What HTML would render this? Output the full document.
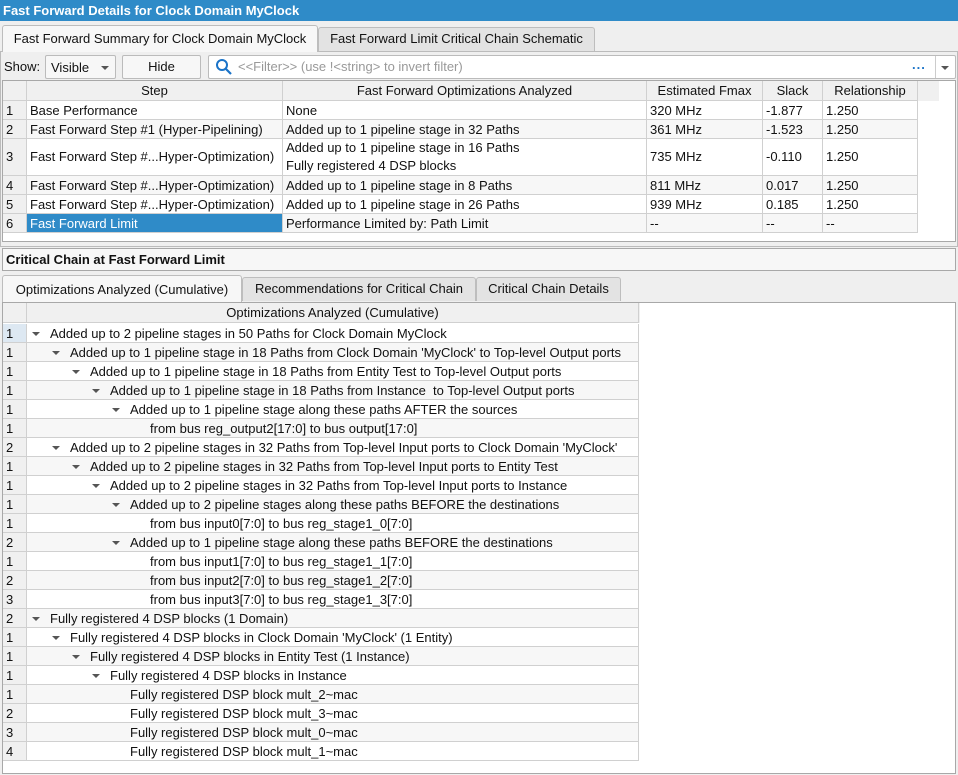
<!DOCTYPE html>
<html><head><meta charset="utf-8"><style>
*{box-sizing:border-box;margin:0;padding:0}
body{width:958px;height:775px;background:#efefef;font-family:"Liberation Sans","DejaVu Sans",sans-serif;font-size:13px;color:#111;position:relative;overflow:hidden}
.a{position:absolute}
.title{left:0;top:0;width:958px;height:21px;background:#2f8bc8;color:#fff;font-weight:bold;padding:3px 0 0 3px}
.tab{position:absolute;border:1px solid #bdbdbd;border-bottom:none;border-radius:3px 3px 0 0;background:#e3e3e3;text-align:center;line-height:22px}
.tab.act{background:#f7f7f7;}
.box{position:absolute;border:1px solid #a8a8a8;background:#fff}
.c{position:absolute;height:19px;line-height:19px;white-space:nowrap;overflow:hidden;border-right:1px solid #d0d0d0;border-bottom:1px solid #d0d0d0;padding-left:3px}
.h{background:#f0f0f0;text-align:center;padding-left:0}
.arr{display:inline-block;width:0;height:0;border-left:4px solid transparent;border-right:4px solid transparent;border-top:4px solid #555;position:absolute;top:8px}
</style></head><body>
<div class="a title">Fast Forward Details for Clock Domain MyClock</div>
<div class="a" style="left:0;top:51px;width:958px;height:196px;background:#efefef;border:1px solid #bbb"></div>
<div class="tab act" style="left:2px;top:25px;width:316px;height:27px;line-height:26px">Fast Forward Summary for Clock Domain MyClock</div>
<div class="tab" style="left:318px;top:27px;width:277px;height:24px">Fast Forward Limit Critical Chain Schematic</div>
<div class="a" style="left:4px;top:59px">Show:</div>
<div class="a" style="left:45px;top:55px;width:71px;height:24px;border:1px solid #bbb;border-radius:2px;background:#f7f7f7;padding:4px 0 0 5px">Visible<span class="arr" style="left:55px;top:10px"></span></div>
<div class="a" style="left:122px;top:55px;width:79px;height:24px;border:1px solid #bbb;border-radius:2px;background:#f7f7f7;text-align:center;line-height:22px">Hide</div>
<div class="a" style="left:208px;top:55px;width:748px;height:24px;border:1px solid #bbb;border-radius:2px;background:#fff"></div>
<svg class="a" style="left:215px;top:58px" width="18" height="18"><circle cx="7" cy="7" r="5" fill="none" stroke="#1a73c8" stroke-width="2"/><line x1="11" y1="11" x2="16" y2="16" stroke="#1a73c8" stroke-width="2.2"/></svg>
<div class="a" style="left:238px;top:59px;color:#999">&lt;&lt;Filter&gt;&gt; (use !&lt;string&gt; to invert filter)</div>
<div class="a" style="left:912px;top:57px;color:#1a73c8;font-weight:bold;letter-spacing:1px">...</div>
<div class="a" style="left:935px;top:56px;width:1px;height:22px;background:#ccc"></div>
<span class="arr" style="left:941px;top:66px"></span>
<div class="box" style="left:2px;top:80px;width:954px;height:162px"></div>
<div class="a" style="left:3px;top:81px;width:936px;height:20px;background:#f0f0f0"></div>
<div id="t1"></div>
<div class="a" style="left:473px;top:243px;color:#aaa;font-size:8px">......</div>
<div class="box" style="left:2px;top:248px;width:954px;height:23px;background:#f7f7f7;font-weight:bold;padding:3px 0 0 3px">Critical Chain at Fast Forward Limit</div>
<div class="tab act" style="left:2px;top:275px;width:240px;height:28px;line-height:27px">Optimizations Analyzed (Cumulative)</div>
<div class="tab" style="left:242px;top:277px;width:234px;height:24px">Recommendations for Critical Chain</div>
<div class="tab" style="left:476px;top:277px;width:145px;height:24px">Critical Chain Details</div>
<div class="box" style="left:2px;top:302px;width:954px;height:472px"></div>
<div class="a" style="left:3px;top:303px;width:637px;height:20px;background:#f0f0f0"></div>
<div id="t2"></div>
<script>
function cell(p,x,y,w,h,t,cls,st){var d=document.createElement('div');d.className='c '+(cls||'');d.style.cssText='left:'+x+'px;top:'+y+'px;width:'+w+'px;height:'+h+'px;'+(st||'');d.innerHTML=t;p.appendChild(d);}
var t1=document.getElementById('t1');
var cx=[3,27,283,647,763,823,918];
var hd=['','Step','Fast Forward Optimizations Analyzed','Estimated Fmax','Slack','Relationship'];
for(var i=0;i<6;i++)cell(t1,cx[i],81,cx[i+1]-cx[i],20,hd[i],'h','line-height:20px');
var rows=[['1','Base Performance','None','320 MHz','-1.877','1.250'],
['2','Fast Forward Step #1 (Hyper-Pipelining)','Added up to 1 pipeline stage in 32 Paths','361 MHz','-1.523','1.250'],
['3','Fast Forward Step #...Hyper-Optimization)','Added up to 1 pipeline stage in 16 Paths<br>Fully registered 4 DSP blocks','735 MHz','-0.110','1.250'],
['4','Fast Forward Step #...Hyper-Optimization)','Added up to 1 pipeline stage in 8 Paths','811 MHz','0.017','1.250'],
['5','Fast Forward Step #...Hyper-Optimization)','Added up to 1 pipeline stage in 26 Paths','939 MHz','0.185','1.250'],
['6','Fast Forward Limit','Performance Limited by: Path Limit','--','--','--']];
var ry=[101,120,139,176,195,214,233];
for(var r=0;r<6;r++){var h=ry[r+1]-ry[r];for(var i=0;i<6;i++){var st='background:'+(r%2?'#f7f7f7':'#fff')+';';
if(r==2){st+='line-height:18px;padding-top:0;'; if(i!=2)st+='padding-top:9px;';}
if(r==5&&i==1)st+='background:#2f8bc8;color:#fff;';
if(i==0)st+='background:#f0f0f0;';
cell(t1,cx[i],ry[r],cx[i+1]-cx[i],h,rows[r][i],'',st);}}
var t2=document.getElementById('t2');
cell(t2,3,303,24,20,'','h');cell(t2,27,303,612,20,'Optimizations Analyzed (Cumulative)','h','line-height:20px');
var L=[['1',0,1,'Added up to 2 pipeline stages in 50 Paths for Clock Domain MyClock'],
['1',1,1,"Added up to 1 pipeline stage in 18 Paths from Clock Domain 'MyClock' to Top-level Output ports"],
['1',2,1,'Added up to 1 pipeline stage in 18 Paths from Entity Test to Top-level Output ports'],
['1',3,1,'Added up to 1 pipeline stage in 18 Paths from Instance&nbsp; to Top-level Output ports'],
['1',4,1,'Added up to 1 pipeline stage along these paths AFTER the sources'],
['1',5,0,'from bus reg_output2[17:0] to bus output[17:0]'],
['2',1,1,"Added up to 2 pipeline stages in 32 Paths from Top-level Input ports to Clock Domain 'MyClock'"],
['1',2,1,'Added up to 2 pipeline stages in 32 Paths from Top-level Input ports to Entity Test'],
['1',3,1,'Added up to 2 pipeline stages in 32 Paths from Top-level Input ports to Instance'],
['1',4,1,'Added up to 2 pipeline stages along these paths BEFORE the destinations'],
['1',5,0,'from bus input0[7:0] to bus reg_stage1_0[7:0]'],
['2',4,1,'Added up to 1 pipeline stage along these paths BEFORE the destinations'],
['1',5,0,'from bus input1[7:0] to bus reg_stage1_1[7:0]'],
['2',5,0,'from bus input2[7:0] to bus reg_stage1_2[7:0]'],
['3',5,0,'from bus input3[7:0] to bus reg_stage1_3[7:0]'],
['2',0,1,'Fully registered 4 DSP blocks (1 Domain)'],
['1',1,1,"Fully registered 4 DSP blocks in Clock Domain 'MyClock' (1 Entity)"],
['1',2,1,'Fully registered 4 DSP blocks in Entity Test (1 Instance)'],
['1',3,1,'Fully registered 4 DSP blocks in Instance'],
['1',4,0,'Fully registered DSP block mult_2~mac'],
['2',4,0,'Fully registered DSP block mult_3~mac'],
['3',4,0,'Fully registered DSP block mult_0~mac'],
['4',4,0,'Fully registered DSP block mult_1~mac']];
for(var r=0;r<L.length;r++){var y=324+r*19;var bg=r%2?'#f7f7f7':'#fff';
cell(t2,3,y,24,19,L[r][0],'','background:'+(r==0?'#dde8f2':'#f0f0f0'));
var tx=50+20*L[r][1]-27;
var s='<span style="position:absolute;left:'+tx+'px">'+L[r][3]+'</span>';
if(L[r][2])s+='<span class="arr" style="left:'+(tx-18)+'px"></span>';
cell(t2,27,y,612,19,s,'','background:'+bg);}
</script>
</body></html>
